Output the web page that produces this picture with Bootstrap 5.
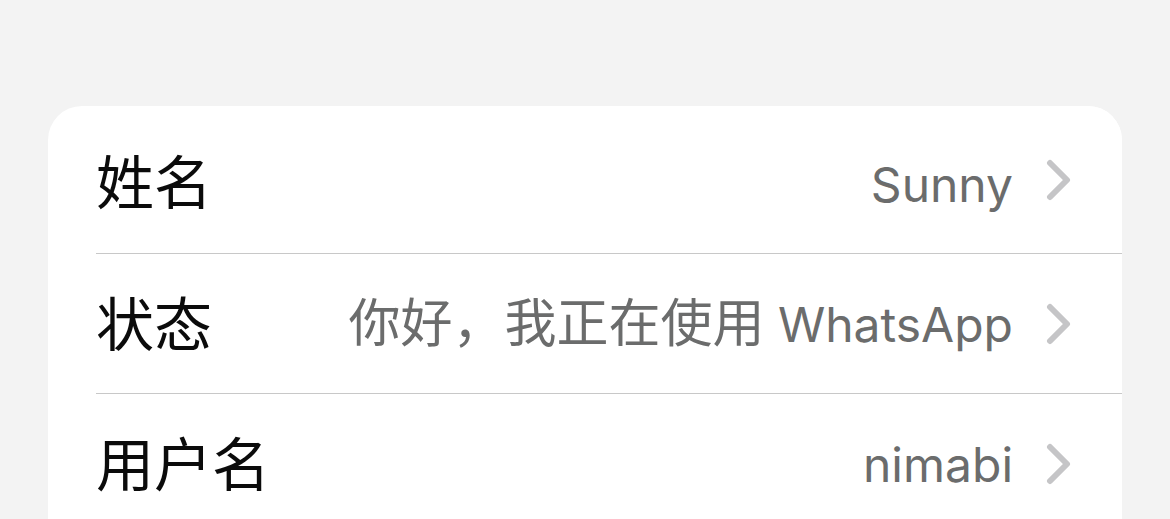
<!DOCTYPE html>
<html lang="zh-CN">
<head>
<meta charset="utf-8">
<meta name="viewport" content="width=device-width, initial-scale=1">
<title>个人资料</title>
<link href="https://cdn.jsdelivr.net/npm/bootstrap@5.3.0/dist/css/bootstrap.min.css" rel="stylesheet">
<style>
body{background:#f3f3f3;font-family:Inter,"Noto Sans CJK SC",sans-serif;overflow:hidden}
.page{padding:106px 48px 0}
.settings{background:#fff;border-radius:34px;overflow:hidden;padding:0 0 48px 48px}
.settings .list-group-item{background:#fff;color:#0b0b0b;min-height:140px;padding:0 51px 0 0;border:0;border-bottom:1px solid #c8c8c8;border-radius:0}
.settings .list-group-item:first-child{min-height:148px}
.row-label{font-size:58px;line-height:80px;padding-top:2px}
.row-value{font-size:48px;line-height:72px;color:#6b6c6c;padding-top:2px}
.row-value .han{font-size:52px}
.list-group-item:first-child .row-label{padding-top:6px}
.list-group-item:first-child .row-value{padding-top:10px}
.chevron{width:26px;height:44px;margin-left:32px}
</style>
</head>
<body>
<main class="page">
<div class="settings list-group">
<a href="#name" class="list-group-item list-group-item-action d-flex align-items-center"><span class="row-label">姓名</span><span class="row-value ms-auto">Sunny</span><svg class="chevron" viewBox="0 0 26 44" fill="none" stroke="#c5c5c7" stroke-width="6" stroke-linecap="round" stroke-linejoin="round" aria-hidden="true"><path d="M5 5 22 22 5 39"/></svg></a>
<a href="#about" class="list-group-item list-group-item-action d-flex align-items-center"><span class="row-label">状态</span><span class="row-value ms-auto"><span class="han">你好，我正在使用</span> WhatsApp</span><svg class="chevron" viewBox="0 0 26 44" fill="none" stroke="#c5c5c7" stroke-width="6" stroke-linecap="round" stroke-linejoin="round" aria-hidden="true"><path d="M5 5 22 22 5 39"/></svg></a>
<a href="#username" class="list-group-item list-group-item-action d-flex align-items-center"><span class="row-label">用户名</span><span class="row-value ms-auto">nimabi</span><svg class="chevron" viewBox="0 0 26 44" fill="none" stroke="#c5c5c7" stroke-width="6" stroke-linecap="round" stroke-linejoin="round" aria-hidden="true"><path d="M5 5 22 22 5 39"/></svg></a>
</div>
</main>
<script src="https://cdn.jsdelivr.net/npm/bootstrap@5.3.0/dist/js/bootstrap.bundle.min.js"></script>
</body>
</html>
